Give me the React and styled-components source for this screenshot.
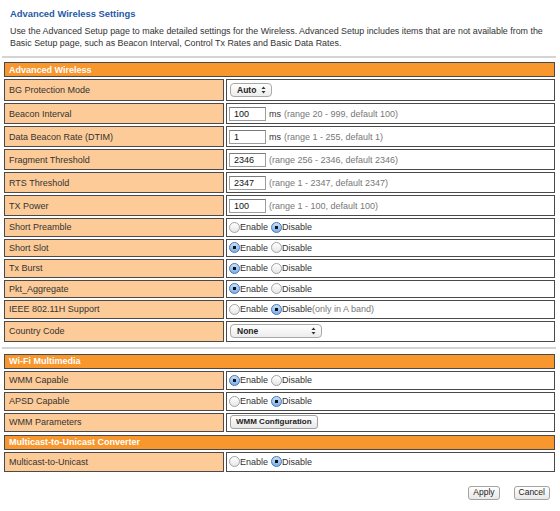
import React from "react";
import styled, { createGlobalStyle } from "styled-components";

const Global = createGlobalStyle`
  html, body { margin: 0; padding: 0; background: #fff; }
  * { box-sizing: border-box; }
`;

const Page = styled.div`
  width: 560px;
  font-family: "Liberation Sans", Arial, sans-serif;
  font-size: 9px;
  color: #333;
  padding-top: 8px;
`;

const Title = styled.h1`
  margin: 0 0 0 10px;
  font-size: 9.4px;
  line-height: 12px;
  font-weight: bold;
  color: #1f5aa6;
`;

const Desc = styled.p`
  margin: 5px 2px 0 10px;
  line-height: 12px;
  font-size: 8.9px;
  color: #333;
`;

const Rule = styled.hr`
  margin: ${(p) => p.$top}px 4px 0 2px;
  border: 0;
  height: 2px;
  background: #d4d4d4;
`;

const Section = styled.div`
  display: grid;
  grid-template-columns: 220px 329px;
  column-gap: 2px;
  row-gap: 2px;
  margin: ${(p) => p.$top}px 0 0 4px;
`;

const Header = styled.div`
  grid-column: 1 / -1;
  height: 15px;
  background: #f8972e;
  border: 1px solid #4a4a4a;
  color: #fff;
  font-weight: bold;
  font-size: 9px;
  padding-left: 4px;
  display: flex;
  align-items: center;
`;

const Label = styled.div`
  height: ${(p) => p.$h}px;
  background: #fdcb98;
  border: 1px solid #4a4a4a;
  padding-left: 4px;
  display: flex;
  align-items: center;
  color: #333;
`;

const Value = styled.div`
  height: ${(p) => p.$h}px;
  background: #fff;
  border: 1px solid #4a4a4a;
  padding-left: 2px;
  display: flex;
  align-items: center;
  color: #333;
  white-space: nowrap;
`;

const TextBox = styled.input`
  width: 37px;
  height: 14px;
  margin: 0 3px 0 0;
  padding: 0 0 0 4px;
  border: 1px solid #9c9c9c;
  border-top-color: #7a7a7a;
  font-family: "Liberation Sans", Arial, sans-serif;
  font-size: 9px;
  color: #111;
  background: #fff;
  outline: none;
`;

const Unit = styled.span`
  color: #333;
  margin-right: 3px;
`;

const Hint = styled.span`
  color: #777;
`;

const Radio = styled.input.attrs({ type: "radio" })`
  appearance: none;
  -webkit-appearance: none;
  margin: 0;
  width: 11px;
  height: 11px;
  border-radius: 50%;
  border: 1px solid #a3a3a3;
  background: linear-gradient(#ffffff, #e6e6e6);
  flex: none;
  &:checked {
    border-color: #4677b8;
    background: radial-gradient(circle, #111 0, #111 1.4px, transparent 1.9px),
      linear-gradient(#c9e0f7, #7cb0ea);
  }
`;

const Choice = styled.label`
  display: inline-flex;
  align-items: center;
  margin-right: 3px;
  color: #333;
`;

const Popup = styled.div`
  width: ${(p) => p.$w}px;
  height: 14px;
  margin-left: 1px;
  border: 1px solid #a8a8a8;
  border-radius: 4px;
  background: linear-gradient(#ffffff, #ececec);
  display: flex;
  align-items: center;
  justify-content: space-between;
  padding: 0 5px 0 6px;
  font-weight: bold;
  color: #222;
  font-size: 8.5px;
`;

const PushButton = styled.button`
  height: 14px;
  padding: 0 ${(p) => (p.$bold ? 5 : 4)}px;
  margin: 0 0 0 1px;
  border: 1px solid #a3a3a3;
  border-radius: 3px;
  background: linear-gradient(#ffffff, #e8e8e8);
  font-family: "Liberation Sans", Arial, sans-serif;
  font-size: ${(p) => (p.$bold ? 8 : 8.5)}px;
  font-weight: ${(p) => (p.$bold ? "bold" : "normal")};
  color: #222;
  display: inline-flex;
  align-items: center;
  line-height: 1;
`;

const Footer = styled.div`
  display: flex;
  justify-content: flex-end;
  gap: 13px;
  margin: 14px 10px 0 0;
`;

const Arrows = () => (
  <svg width="5" height="8" viewBox="0 0 5 8">
    <path d="M2.5 0.5 L4.5 3 L0.5 3 Z" fill="#333" />
    <path d="M2.5 7.5 L4.5 5 L0.5 5 Z" fill="#333" />
  </svg>
);

const RadioPair = ({ name, on, extra }) => (
  <>
    <Choice>
      <Radio name={name} defaultChecked={on} />
      Enable
    </Choice>
    <Choice>
      <Radio name={name} defaultChecked={!on} />
      Disable
      {extra && <Hint>{extra}</Hint>}
    </Choice>
  </>
);

const inputRows = [
  ["Beacon Interval", "100", "ms", "(range 20 - 999, default 100)"],
  ["Data Beacon Rate (DTIM)", "1", "ms", "(range 1 - 255, default 1)"],
  ["Fragment Threshold", "2346", null, "(range 256 - 2346, default 2346)"],
  ["RTS Threshold", "2347", null, "(range 1 - 2347, default 2347)"],
  ["TX Power", "100", null, "(range 1 - 100, default 100)"],
];

const radioRows = [
  ["Short Preamble", false],
  ["Short Slot", true],
  ["Tx Burst", true],
  ["Pkt_Aggregate", true],
  ["IEEE 802.11H Support", false, "(only in A band)"],
];

export default function App() {
  return (
    <Page>
      <Global />
      <Title>Advanced Wireless Settings</Title>
      <Desc>
        Use the Advanced Setup page to make detailed settings for the Wireless. Advanced Setup includes items that are not available from the
        Basic Setup page, such as Beacon Interval, Control Tx Rates and Basic Data Rates.
      </Desc>
      <Rule $top={7} />
      <Section $top={4}>
        <Header>Advanced Wireless</Header>
        <Label $h={22}>BG Protection Mode</Label>
        <Value $h={22}>
          <Popup $w={42}>
            Auto <Arrows />
          </Popup>
        </Value>
        {inputRows.map(([label, val, unit, hint]) => (
          <React.Fragment key={label}>
            <Label $h={21}>{label}</Label>
            <Value $h={21}>
              <TextBox defaultValue={val} />
              {unit && <Unit>{unit}</Unit>}
              <Hint>{hint}</Hint>
            </Value>
          </React.Fragment>
        ))}
        {radioRows.map(([label, on, extra]) => (
          <React.Fragment key={label}>
            <Label $h={18.5}>{label}</Label>
            <Value $h={18.5}>
              <RadioPair name={label} on={on} extra={extra} />
            </Value>
          </React.Fragment>
        ))}
        <Label $h={21}>Country Code</Label>
        <Value $h={21}>
          <Popup $w={92}>
            None <Arrows />
          </Popup>
        </Value>
      </Section>
      <Rule $top={5} />
      <Section $top={5}>
        <Header>Wi-Fi Multimedia</Header>
        <Label $h={19}>WMM Capable</Label>
        <Value $h={19}>
          <RadioPair name="wmm" on={true} />
        </Value>
        <Label $h={19}>APSD Capable</Label>
        <Value $h={19}>
          <RadioPair name="apsd" on={false} />
        </Value>
        <Label $h={19}>WMM Parameters</Label>
        <Value $h={19}>
          <PushButton $bold>WMM Configuration</PushButton>
        </Value>
      </Section>
      <Section $top={3}>
        <Header>Multicast-to-Unicast Converter</Header>
        <Label $h={20}>Multicast-to-Unicast</Label>
        <Value $h={20}>
          <RadioPair name="m2u" on={false} />
        </Value>
      </Section>
      <Footer>
        <PushButton>Apply</PushButton>
        <PushButton>Cancel</PushButton>
      </Footer>
    </Page>
  );
}
